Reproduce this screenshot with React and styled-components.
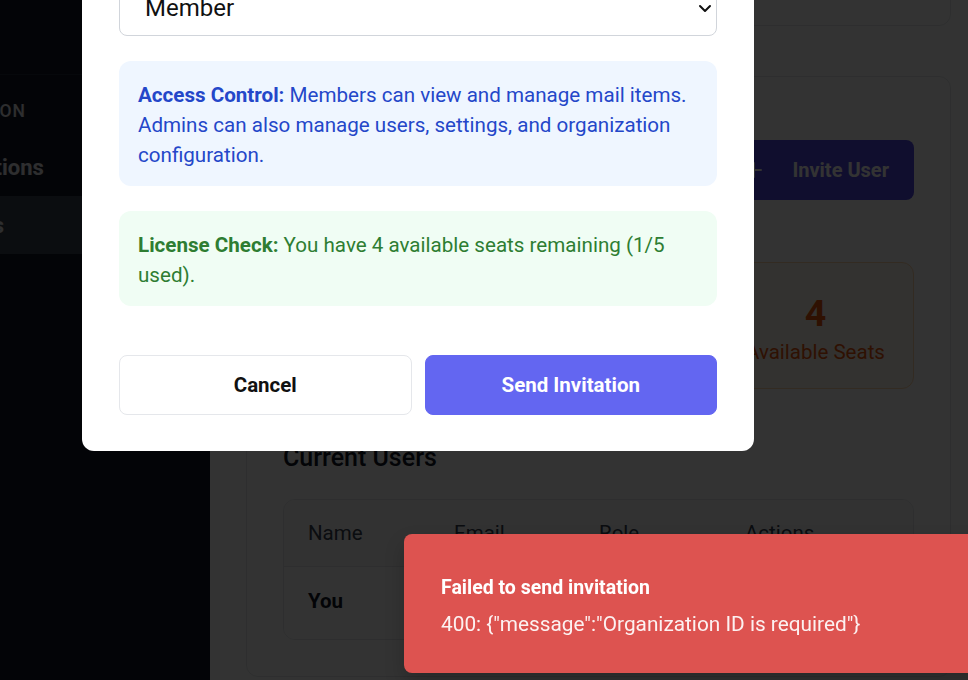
import React from "react";
import styled, { createGlobalStyle } from "styled-components";

const GlobalStyle = createGlobalStyle`
  * { box-sizing: border-box; }
  html, body { margin: 0; padding: 0; overflow: hidden; }
  body {
    font-family: Roboto, "Liberation Sans", Arial, sans-serif;
    color: #111827;
    background: #ffffff;
  }
`;

const Layout = styled.div`
  display: flex;
  height: 680px;
  margin-left: -110px;
`;

const Sidebar = styled.aside`
  width: 320px;
  flex-shrink: 0;
  background: #111827;
  display: flex;
  flex-direction: column;
`;

const Brand = styled.div`
  height: 75px;
  border-bottom: 1px solid #1f2937;
  display: flex;
  align-items: center;
  padding: 0 24px;
  color: #ffffff;
  font-size: 24px;
  font-weight: 700;
`;

const Nav = styled.nav`
  padding-top: 23px;
  display: flex;
  flex-direction: column;
`;

const NavLabel = styled.div`
  padding-left: 0;
  margin-bottom: 14px;
  font-size: 17.5px;
  line-height: 26px;
  font-weight: 500;
  letter-spacing: 0.05em;
  text-transform: uppercase;
  color: #e5e7eb;
`;

const NavItem = styled.div`
  height: 58px;
  display: flex;
  align-items: center;
  padding-left: 57px;
  font-size: 22px;
  font-weight: 700;
  color: #e5e7eb;
  background: ${(p) => (p.$active ? "#374151" : "transparent")};
`;

const Main = styled.main`
  flex: 1;
  background: #ffffff;
  padding: 0 17px 0 36px;
  display: flex;
  flex-direction: column;
`;

const TopCard = styled.div`
  height: 101px;
  margin-top: -75px;
  border: 1px solid #e5e7eb;
  border-radius: 12px;
`;

const Card = styled.section`
  margin-top: 50px;
  border: 1px solid #e5e7eb;
  border-radius: 12px;
  padding: 36px;
  display: flex;
  flex-direction: column;
`;

const CardHeader = styled.div`
  min-height: 113px;
  display: flex;
  align-items: center;
  justify-content: space-between;
`;

const Title = styled.h2`
  margin: 0 0 8px;
  font-size: 30px;
  line-height: 45px;
  font-weight: 700;
`;

const Subtitle = styled.p`
  margin: 0;
  font-size: 20px;
  line-height: 30px;
  color: #6b7280;
`;

const PrimaryButton = styled.button`
  height: 60px;
  padding: 0 25px;
  display: flex;
  align-items: center;
  gap: 28px;
  border: none;
  border-radius: 8px;
  background: #4f46e5;
  color: #ffffff;
  font-family: inherit;
  font-size: 20px;
  font-weight: 700;
`;

const StatsGrid = styled.div`
  margin-top: 36px;
  display: grid;
  grid-template-columns: repeat(3, 1fr);
  gap: 20px;
`;

const tones = {
  blue: { bg: "#eff6ff", border: "#bfdbfe", fg: "#1d4ed8" },
  green: { bg: "#f0fdf4", border: "#bbf7d0", fg: "#15803d" },
  orange: { bg: "#fff7ed", border: "#fed7aa", fg: "#ea580c" },
};

const StatCard = styled.div`
  height: 127px;
  padding-top: 28px;
  border: 1px solid ${(p) => tones[p.$tone].border};
  border-radius: 12px;
  background: ${(p) => tones[p.$tone].bg};
  color: ${(p) => tones[p.$tone].fg};
  text-align: center;
`;

const StatValue = styled.div`
  font-size: 37.5px;
  line-height: 45px;
  font-weight: 700;
  margin-bottom: 1px;
`;

const StatLabel = styled.div`
  font-size: 20.5px;
  line-height: 30px;
`;

const SectionTitle = styled.h3`
  margin: 50px 0 0;
  font-size: 25px;
  line-height: 37.5px;
  font-weight: 500;
`;

const Table = styled.div`
  margin-top: 22px;
  border: 1px solid #e5e7eb;
  border-radius: 12px;
  overflow: hidden;
`;

const Row = styled.div`
  display: grid;
  grid-template-columns: 146px 145px 146px 1fr;
  background: ${(p) => (p.$head ? "#f9fafb" : "#ffffff")};
  border-bottom: ${(p) => (p.$head ? "1px solid #e5e7eb" : "none")};
`;

const Cell = styled.div`
  padding: ${(p) => (p.$head ? "18px 24px" : "19px 24px 23px")};
  font-size: 20.5px;
  line-height: 30px;
  font-weight: ${(p) => (p.$strong ? 700 : 400)};
  color: ${(p) => (p.$head ? "#374151" : "#111827")};
  white-space: nowrap;
`;

const Overlay = styled.div`
  position: fixed;
  inset: 0;
  background: rgba(0, 0, 0, 0.8);
`;

const Modal = styled.div`
  position: absolute;
  left: 82px;
  bottom: 229px;
  width: 672px;
  padding: 37px 37px 36px;
  background: #ffffff;
  border-radius: 12px;
  display: flex;
  flex-direction: column;
`;

const ModalTitle = styled.h2`
  margin: 0 0 25px;
  font-size: 28px;
  font-weight: 700;
`;

const FieldLabel = styled.label`
  display: block;
  margin-bottom: 10px;
  font-size: 20px;
  font-weight: 500;
  color: #374151;
`;

const Field = styled.div`
  margin-bottom: ${(p) => (p.$last ? "0" : "25px")};
`;

const Input = styled.input`
  width: 100%;
  height: 56px;
  padding: 0 25px;
  border: 1px solid #d1d5db;
  border-radius: 8px;
  font-family: inherit;
  font-size: 22px;
`;

const SelectWrap = styled.div`
  position: relative;
`;

const Select = styled.select`
  width: 100%;
  height: 56px;
  padding: 0 25px;
  border: 1px solid #d1d5db;
  border-radius: 8px;
  appearance: none;
  background: #ffffff;
  color: #111111;
  font-family: inherit;
  font-size: 24px;
`;

const Chevron = styled.svg`
  position: absolute;
  right: 5px;
  top: 24px;
  pointer-events: none;
`;

const Notice = styled.div`
  margin-top: 25px;
  padding: 19px 19px 16px;
  border-radius: 12px;
  background: ${(p) => (p.$tone === "green" ? "#f0fdf4" : "#eff6ff")};
  color: ${(p) => (p.$tone === "green" ? "#2e7d32" : "#2447c9")};
  font-size: 20.6px;
  line-height: 30px;

  strong {
    font-weight: 700;
  }
`;

const Actions = styled.div`
  margin-top: 49px;
  display: flex;
  gap: 13px;
`;

const Button = styled.button`
  flex: 1;
  height: 60px;
  border-radius: 8px;
  border: 1px solid ${(p) => (p.$primary ? "#6366f1" : "#e5e7eb")};
  background: ${(p) => (p.$primary ? "#6366f1" : "#ffffff")};
  color: ${(p) => (p.$primary ? "#ffffff" : "#111111")};
  font-family: inherit;
  font-size: 20.5px;
  font-weight: 700;
`;

const Toast = styled.div`
  position: fixed;
  left: 404px;
  top: 534px;
  width: 600px;
  padding: 40px 37px 34px;
  border-radius: 8px;
  background: #dd5350;
  color: #ffffff;
  box-shadow: 0 10px 20px rgba(0, 0, 0, 0.2);
`;

const ToastTitle = styled.div`
  font-size: 19.5px;
  line-height: 28px;
  font-weight: 700;
  margin-bottom: 7px;
`;

const ToastText = styled.div`
  font-size: 20.8px;
  line-height: 30px;
  opacity: 0.92;
`;

function PlusIcon() {
  return (
    <svg width="20" height="20" viewBox="0 0 20 20" fill="none" stroke="currentColor" strokeWidth="2" strokeLinecap="round">
      <path d="M10 3v14M3 10h14" />
    </svg>
  );
}

export default function App() {
  return (
    <>
      <GlobalStyle />
      <Layout>
        <Sidebar>
          <Brand>Mail</Brand>
          <Nav>
            <NavLabel>Organization</NavLabel>
            <NavItem>Locations</NavItem>
            <NavItem $active>Users</NavItem>
          </Nav>
        </Sidebar>
        <Main>
          <TopCard />
          <Card>
            <CardHeader>
              <div>
                <Title>User Management</Title>
                <Subtitle>Manage who has access to your organization</Subtitle>
              </div>
              <PrimaryButton>
                <PlusIcon />
                Invite User
              </PrimaryButton>
            </CardHeader>
            <StatsGrid>
              <StatCard $tone="blue">
                <StatValue>5</StatValue>
                <StatLabel>Total Seats</StatLabel>
              </StatCard>
              <StatCard $tone="green">
                <StatValue>1</StatValue>
                <StatLabel>Used Seats</StatLabel>
              </StatCard>
              <StatCard $tone="orange">
                <StatValue>4</StatValue>
                <StatLabel>Available Seats</StatLabel>
              </StatCard>
            </StatsGrid>
            <SectionTitle>Current Users</SectionTitle>
            <Table>
              <Row $head>
                <Cell $head>Name</Cell>
                <Cell $head>Email</Cell>
                <Cell $head>Role</Cell>
                <Cell $head>Actions</Cell>
              </Row>
              <Row>
                <Cell $strong>You</Cell>
                <Cell>owner@mail.com</Cell>
                <Cell>Admin</Cell>
                <Cell>—</Cell>
              </Row>
            </Table>
          </Card>
        </Main>
      </Layout>

      <Overlay>
        <Modal>
          <ModalTitle>Invite User</ModalTitle>
          <Field>
            <FieldLabel>Email Address</FieldLabel>
            <Input placeholder="user@example.com" />
          </Field>
          <Field $last>
            <FieldLabel>Role</FieldLabel>
            <SelectWrap>
              <Select defaultValue="member">
                <option value="member">Member</option>
                <option value="admin">Admin</option>
              </Select>
              <Chevron width="14" height="9" viewBox="0 0 14 9" fill="none" stroke="#111111" strokeWidth="2" strokeLinecap="round" strokeLinejoin="round">
                <path d="M2 2l5 5 5-5" />
              </Chevron>
            </SelectWrap>
          </Field>
          <Notice>
            <strong>Access Control:</strong> Members can view and manage mail items.
            Admins can also manage users, settings, and organization configuration.
          </Notice>
          <Notice $tone="green">
            <strong>License Check:</strong> You have 4 available seats remaining (1/5
            used).
          </Notice>
          <Actions>
            <Button>Cancel</Button>
            <Button $primary>Send Invitation</Button>
          </Actions>
        </Modal>
      </Overlay>

      <Toast>
        <ToastTitle>Failed to send invitation</ToastTitle>
        <ToastText>400: {"{\"message\":\"Organization ID is required\"}"}</ToastText>
      </Toast>
    </>
  );
}
